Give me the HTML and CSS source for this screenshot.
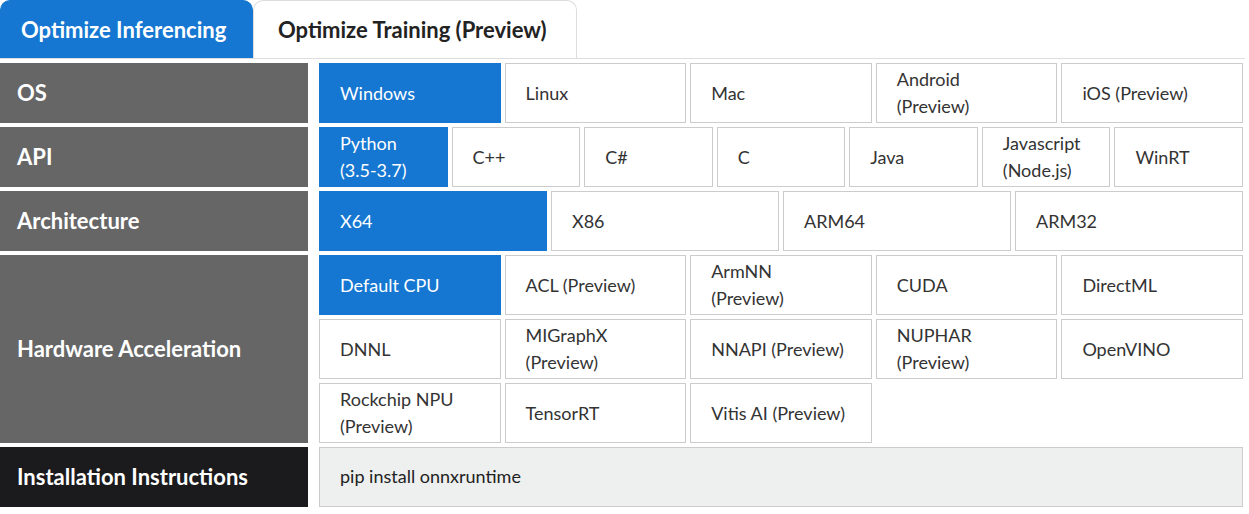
FILE: index.html
```html
<!DOCTYPE html>
<html>
<head>
<meta charset="utf-8">
<link rel="stylesheet" href="styles.css">
</head>
<body>
<div class="page">
  <div class="tabs">
    <div class="tab active">Optimize Inferencing</div>
    <div class="tab">Optimize Training (Preview)</div>
  </div>
  <div class="table">
    <div class="label">OS</div>
    <div class="opts five">
      <div class="opt sel">Windows</div>
      <div class="opt">Linux</div>
      <div class="opt">Mac</div>
      <div class="opt">Android<br>(Preview)</div>
      <div class="opt">iOS (Preview)</div>
    </div>

    <div class="label">API</div>
    <div class="opts seven">
      <div class="opt sel">Python<br>(3.5-3.7)</div>
      <div class="opt">C++</div>
      <div class="opt">C#</div>
      <div class="opt">C</div>
      <div class="opt">Java</div>
      <div class="opt">Javascript<br>(Node.js)</div>
      <div class="opt">WinRT</div>
    </div>

    <div class="label">Architecture</div>
    <div class="opts four">
      <div class="opt sel">X64</div>
      <div class="opt">X86</div>
      <div class="opt">ARM64</div>
      <div class="opt">ARM32</div>
    </div>

    <div class="label">Hardware Acceleration</div>
    <div class="opts five">
      <div class="opt sel">Default CPU</div>
      <div class="opt">ACL (Preview)</div>
      <div class="opt">ArmNN<br>(Preview)</div>
      <div class="opt">CUDA</div>
      <div class="opt">DirectML</div>
      <div class="opt">DNNL</div>
      <div class="opt">MIGraphX<br>(Preview)</div>
      <div class="opt">NNAPI (Preview)</div>
      <div class="opt">NUPHAR<br>(Preview)</div>
      <div class="opt">OpenVINO</div>
      <div class="opt">Rockchip NPU<br>(Preview)</div>
      <div class="opt">TensorRT</div>
      <div class="opt">Vitis AI (Preview)</div>
    </div>

    <div class="label dark">Installation Instructions</div>
    <div class="install">pip install onnxruntime</div>
  </div>
</div>
</body>
</html>
```
FILE: styles.css
```css
html, body {
  margin: 0;
  padding: 0;
  background: #fff;
}
body {
  font-family: Lato, "Open Sans", sans-serif;
  color: #333;
}
.page {
  width: 1245px;
}
.tabs {
  display: flex;
  height: 58px;
  border-bottom: 1px solid #ddd;
}
.tab {
  height: 58px;
  box-sizing: border-box;
  display: flex;
  align-items: center;
  white-space: nowrap;
  font-size: 22px;
  font-weight: 700;
  color: #222;
  padding: 0 0 0 24px;
  border: 1px solid #ddd;
  border-bottom: none;
  border-radius: 10px 10px 0 0;
  background: #fff;
  width: 324px;
}
.tab.active {
  background: #1577d1;
  color: #fff;
  border-color: #1577d1;
  width: 253px;
  padding-left: 20px;
}
.table {
  display: grid;
  grid-template-columns: 308px 924px;
  column-gap: 11px;
  row-gap: 4px;
  margin-top: 4px;
}
.label {
  box-sizing: border-box;
  background: #666;
  color: #fff;
  font-size: 22px;
  font-weight: 700;
  display: flex;
  align-items: center;
  padding: 0 0 2px 17px;
  min-height: 60px;
}
.label.dark {
  background: #1b1a1c;
}
.opts {
  display: grid;
  gap: 4px;
  grid-auto-rows: 60px;
}
.five { grid-template-columns: repeat(5, 1fr); }
.seven { grid-template-columns: repeat(7, 1fr); }
.four { grid-template-columns: repeat(4, 1fr); }
.opt {
  box-sizing: border-box;
  border: 1px solid #ccc;
  background: #fff;
  color: #333;
  font-size: 18px;
  line-height: 27px;
  display: flex;
  align-items: center;
  padding-left: 20px;
}
.opt.sel {
  background: #1577d1;
  border-color: #1577d1;
  color: #fff;
}
.install {
  box-sizing: border-box;
  height: 60px;
  border: 1px solid #ccc;
  background: #eef0ef;
  font-size: 18px;
  color: #222;
  display: flex;
  align-items: center;
  padding: 0 0 2px 20px;
}
```
